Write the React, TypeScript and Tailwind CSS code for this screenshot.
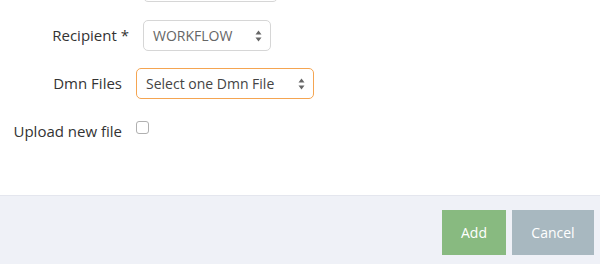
import React from 'react';

function Arrows() {
  return (
    <svg width="7" height="12" viewBox="0 0 7 12" className="shrink-0">
      <path d="M3.5 0.5 L6.5 4.5 L0.5 4.5 Z" fill="#666" />
      <path d="M3.5 11.5 L6.5 7.5 L0.5 7.5 Z" fill="#666" />
    </svg>
  );
}

function Select({ value, w, active, muted }: { value: string; w: string; active?: boolean; muted?: boolean }) {
  return (
    <div
      className={`flex h-[31px] items-center justify-between rounded-[5px] border bg-white pl-[9px] pr-[8px] text-[14px] ${w} ${
        active ? 'border-[#f5a551]' : 'border-[#d6d6d6]'
      } ${muted ? 'text-[#666]' : 'text-[#444]'}`}
    >
      <span>{value}</span>
      <Arrows />
    </div>
  );
}

export default function App() {
  return (
    <div className="flex h-[264px] w-[600px] flex-col overflow-hidden bg-white text-[#333]" style={{ fontFamily: '"Open Sans", sans-serif' }}>
      <div className="flex-1">
        {/* previous field, cut off at the top */}
        <div className="-mt-[29px] flex">
          <div className="ml-[143px] h-[31px] w-[135px] rounded-[5px] border border-[#d6d6d6]" />
        </div>

        <div className="mt-[18px] flex items-center">
          <label className="w-[129px] text-right text-[15px]">Recipient *</label>
          <div className="ml-[14px]">
            <Select value="WORKFLOW" w="w-[128px]" muted />
          </div>
        </div>

        <div className="mt-[17px] flex items-center">
          <label className="w-[122px] text-right text-[15px]">Dmn Files</label>
          <div className="ml-[14px]">
            <Select value="Select one Dmn File" w="w-[178px]" active />
          </div>
        </div>

        <div className="mt-[21px] flex items-start">
          <label className="w-[122px] text-right text-[15px]">Upload new file</label>
          <input type="checkbox" className="ml-[14px] mt-[1px] h-[13px] w-[13px] appearance-none rounded-[3px] border border-[#b0b0b0] bg-white" />
        </div>
      </div>

      <div className="flex h-[69px] justify-end gap-[6px] border-t border-[#e4e6ee] bg-[#eff1f7] pr-[6px] pt-[14px]">
        <button className="h-[45px] w-[64px] bg-[#88ba80] text-[14px] text-white">Add</button>
        <button className="h-[45px] w-[82px] bg-[#a8b8c0] text-[14px] text-white">Cancel</button>
      </div>
    </div>
  );
}
